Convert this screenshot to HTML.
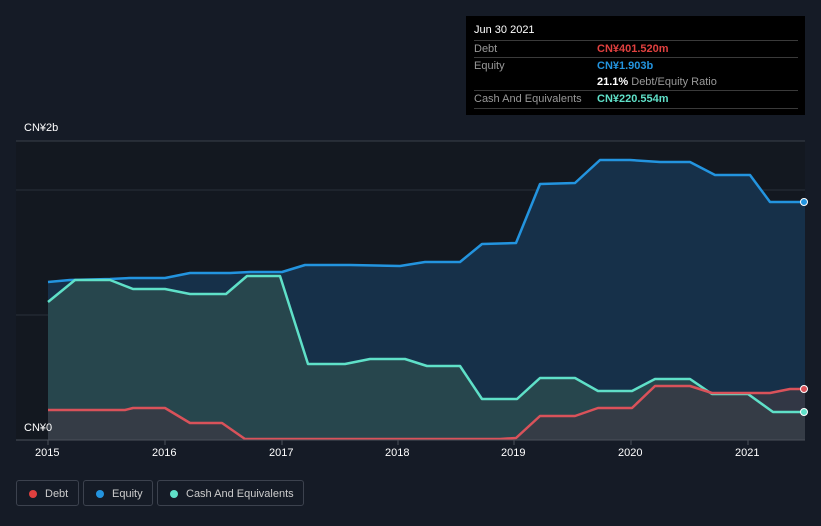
<!DOCTYPE html>
<html><head><style>
body{margin:0;width:821px;height:526px;background:#151b26;font-family:"Liberation Sans","Noto Sans CJK SC",sans-serif;overflow:hidden;position:relative}
.t{position:absolute;color:#fff;font-size:11px}
.tip{position:absolute;left:466px;top:16px;width:339px;height:99px;background:#000;font-size:11px}
.row{position:absolute;left:8px;width:324px;border-top:1px solid #3a3a3a;height:17px;line-height:17px;color:#999}
.row b{position:absolute;left:123px;font-weight:bold}
.leg{position:absolute;top:480px;height:26px;border:1px solid #3c424e;border-radius:3px;color:#ccc;font-size:11px;line-height:26px;box-sizing:border-box}
.leg i{position:absolute;left:12px;top:9px;width:8px;height:8px;border-radius:50%}
</style></head><body>
<svg width="821" height="526" style="position:absolute;left:0;top:0">
<defs>
<linearGradient id="ge" x1="0" y1="0" x2="0" y2="1"><stop offset="0" stop-color="#1b3a5a" stop-opacity=".8"/><stop offset="1" stop-color="#1b3a5a" stop-opacity=".5"/></linearGradient>
</defs>
<rect x="16" y="141" width="789" height="299" fill="#131820"/>
<line x1="16" y1="141" x2="805" y2="141" stroke="#3a404a"/>
<line x1="16" y1="190" x2="805" y2="190" stroke="#2a303a"/>
<line x1="16" y1="315" x2="805" y2="315" stroke="#2a303a"/>
<path d="M48,282 L70,280 110,279 130,278 165,278 190,273 230,273 250,272 282,272 305,265 350,265 400,266 425,262 460,262 482,244 516,243 540,184 575,183 600,160 630,160 660,162 690,162 715,175 750,175 770,202 805,202 L805,440 L48,440Z" fill="#163049"/>
<path d="M48,302 L75,280 110,280 133,289 165,289 190,294 226,294 247,276 280,276 308,364 345,364 370,359 405,359 427,366 460,366 482,399 517,399 540,378 575,378 598,391 632,391 655,379 690,379 712,394 748,394 773,412 805,412 L805,440 L48,440Z" fill="#2a4a4e" opacity=".85"/>
<path d="M48,410 L125,410 133,408 165,408 190,423 222,423 245,439 500,439 516,438 540,416 575,416 598,408 632,408 655,386 690,386 712,393 770,393 790,389 805,389 L805,440 L48,440Z" fill="#3a3a45" opacity=".8"/>
<path d="M48,282 L70,280 110,279 130,278 165,278 190,273 230,273 250,272 282,272 305,265 350,265 400,266 425,262 460,262 482,244 516,243 540,184 575,183 600,160 630,160 660,162 690,162 715,175 750,175 770,202 805,202" fill="none" stroke="#2394df" stroke-width="2.5" stroke-linejoin="round"/>
<path d="M48,302 L75,280 110,280 133,289 165,289 190,294 226,294 247,276 280,276 308,364 345,364 370,359 405,359 427,366 460,366 482,399 517,399 540,378 575,378 598,391 632,391 655,379 690,379 712,394 748,394 773,412 805,412" fill="none" stroke="#5fe0c8" stroke-width="2.5" stroke-linejoin="round"/>
<path d="M48,410 L125,410 133,408 165,408 190,423 222,423 245,439 500,439 516,438 540,416 575,416 598,408 632,408 655,386 690,386 712,393 770,393 790,389 805,389" fill="none" stroke="#d9525a" stroke-width="2.5" stroke-linejoin="round"/>
<line x1="16" y1="440" x2="805" y2="440" stroke="#4a505a"/>
<g stroke="#4a505a"><line x1="48" y1="440" x2="48" y2="445"/><line x1="165" y1="440" x2="165" y2="445"/><line x1="282" y1="440" x2="282" y2="445"/><line x1="398" y1="440" x2="398" y2="445"/><line x1="514" y1="440" x2="514" y2="445"/><line x1="631" y1="440" x2="631" y2="445"/><line x1="748" y1="440" x2="748" y2="445"/></g>
<circle cx="804" cy="202" r="3.5" fill="#2394df" stroke="#fff"/>
<circle cx="804" cy="412" r="3.5" fill="#5fe0c8" stroke="#fff"/>
<circle cx="804" cy="389" r="3.5" fill="#d9525a" stroke="#fff"/>
</svg>
<div class="t" style="left:24px;top:122px">CN¥2b</div>
<div class="t" style="left:24px;top:422px">CN¥0</div>
<div class="t" style="left:35px;top:447px">2015</div>
<div class="t" style="left:152px;top:447px">2016</div>
<div class="t" style="left:269px;top:447px">2017</div>
<div class="t" style="left:385px;top:447px">2018</div>
<div class="t" style="left:501px;top:447px">2019</div>
<div class="t" style="left:618px;top:447px">2020</div>
<div class="t" style="left:735px;top:447px">2021</div>
<div class="tip">
<div style="position:absolute;left:8px;top:8px;color:#fff">Jun 30 2021</div>
<div class="row" style="top:24px">Debt<b style="color:#e0403f">CN¥401.520m</b></div>
<div class="row" style="top:41px">Equity<b style="color:#2394df">CN¥1.903b</b></div>
<div class="row" style="top:58px;border-top:none"><b style="color:#fff">21.1% <span style="color:#999;font-weight:normal">Debt/Equity Ratio</span></b></div>
<div class="row" style="top:74px;border-bottom:1px solid #3a3a3a">Cash And Equivalents<b style="color:#5fe0c8">CN¥220.554m</b></div>
</div>
<div class="leg" style="left:16px;width:63px"><i style="background:#e0403f"></i><span style="margin-left:28px">Debt</span></div>
<div class="leg" style="left:83px;width:70px"><i style="background:#2394df"></i><span style="margin-left:28px">Equity</span></div>
<div class="leg" style="left:157px;width:147px"><i style="background:#5fe0c8"></i><span style="margin-left:28px">Cash And Equivalents</span></div>
</body></html>
